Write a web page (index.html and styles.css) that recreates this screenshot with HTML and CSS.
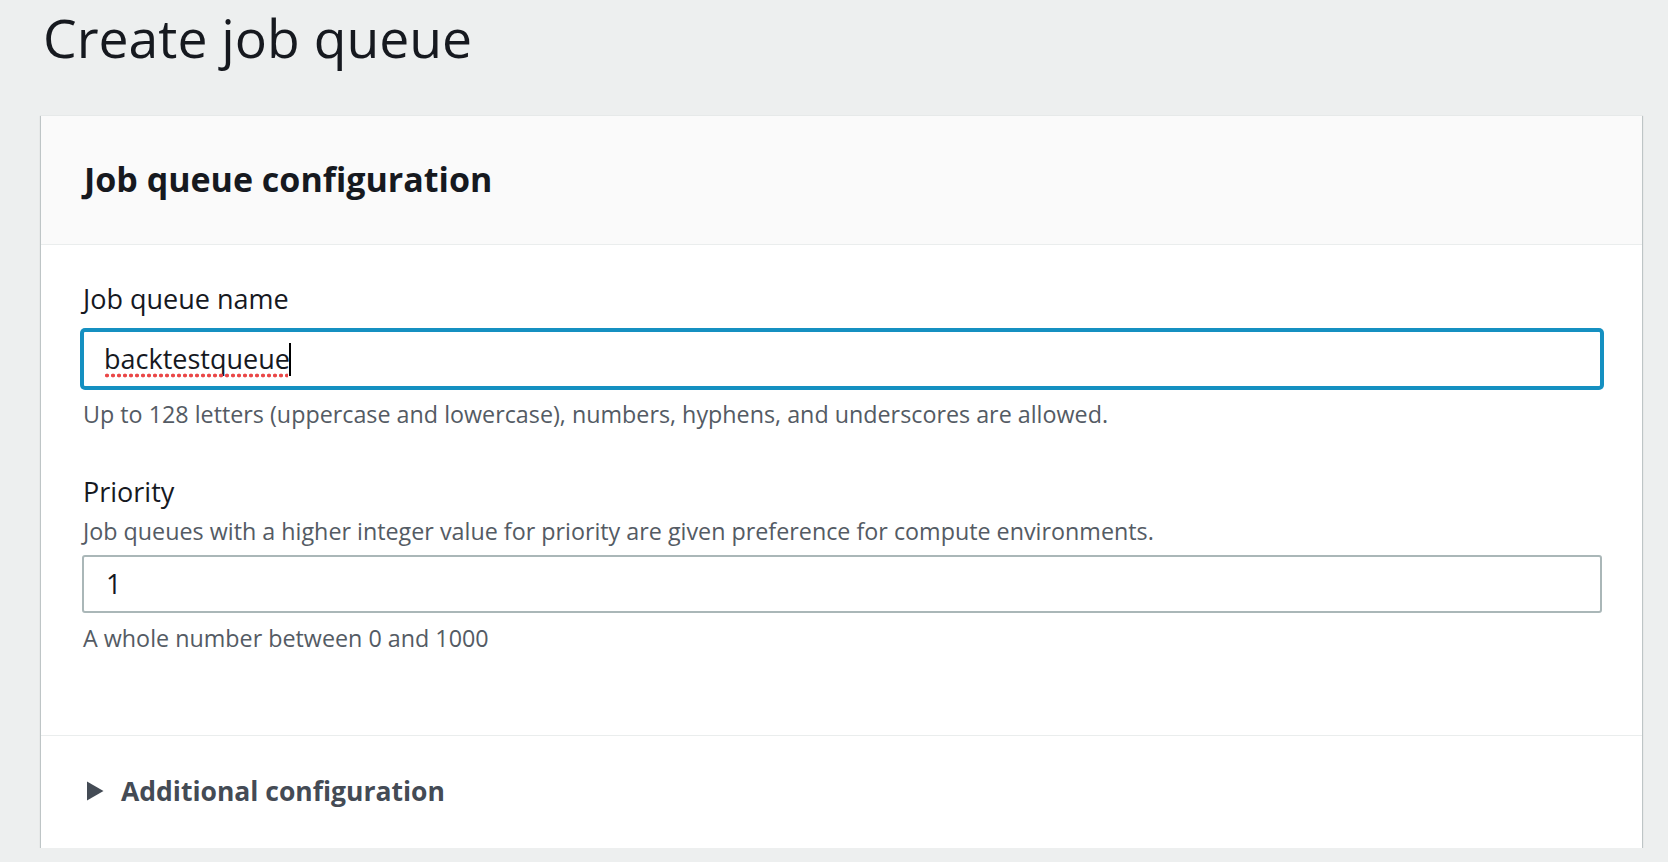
FILE: index.html
```html
<!DOCTYPE html>
<html lang="en">
<head>
<meta charset="utf-8">
<title>Create job queue</title>
<link rel="stylesheet" href="styles.css">
</head>
<body>
<main class="page">
  <h1 class="page-title">Create job queue</h1>
  <section class="card">
    <header class="card-header">
      <h2 class="card-title">Job queue configuration</h2>
    </header>
    <div class="card-body">
      <div class="field">
        <label class="field-label">Job queue name</label>
        <div class="input input-focused"><span class="value misspelled">backtestqueue</span><span class="caret"></span></div>
        <p class="field-help">Up to 128 letters (uppercase and lowercase), numbers, hyphens, and underscores are allowed.</p>
      </div>
      <div class="field field-second">
        <label class="field-label">Priority</label>
        <p class="field-desc">Job queues with a higher integer value for priority are given preference for compute environments.</p>
        <div class="input input-second"><span class="value">1</span></div>
        <p class="field-help">A whole number between 0 and 1000</p>
      </div>
    </div>
    <footer class="card-footer">
      <div class="expander">
        <svg class="expander-icon" width="22" height="20" viewBox="0 0 22 20" aria-hidden="true"><polygon points="5,0.5 21.5,10 5,19.5" fill="#444b55"/></svg>
        <span class="expander-label">Additional configuration</span>
      </div>
    </footer>
  </section>
</main>
</body>
</html>
```
FILE: styles.css
```css
html, body {
  margin: 0;
  padding: 0;
}
body {
  background: #edefef;
  font-family: "Open Sans", "Noto Sans", sans-serif;
  color: #16191f;
}
.page {
  padding: 6px 26px 0 41px;
}
.page-title {
  margin: 0;
  padding-left: 2px;
  font-size: 53.5px;
  line-height: 64px;
  font-weight: 400;
  color: #16191f;
}
.card {
  margin-top: 45px;
  background: #ffffff;
  border-top: 1px solid #e6e9e9;
  box-shadow: 0 1px 1px 0 rgba(0, 28, 36, 0.3), 1px 1px 1px 0 rgba(0, 28, 36, 0.15), -1px 1px 1px 0 rgba(0, 28, 36, 0.15);
}
.card-header {
  background: #fafafa;
  padding: 43px 40px 45px 43px;
  border-bottom: 1px solid #eaeded;
}
.card-title {
  margin: 0;
  font-size: 34px;
  line-height: 40px;
  font-weight: 700;
  color: #16191f;
}
.card-body {
  padding: 37px 40px 83px 41px;
}
.field {
  display: flex;
  flex-direction: column;
}
.field-second {
  margin-top: 47px;
}
.field-label {
  padding-left: 1px;
  font-size: 27px;
  line-height: 34px;
  color: #16191f;
}
.field-desc {
  margin: 8px 0 0;
  padding-left: 1px;
  font-size: 23.3px;
  line-height: 28px;
  color: #545b64;
}
.field-help {
  margin: 12px 0 0;
  padding-left: 1px;
  font-size: 23.3px;
  line-height: 28px;
  color: #545b64;
}
.field-second .field-help {
  margin-top: 11px;
}
.input {
  box-sizing: border-box;
  height: 58px;
  margin-top: 14px;
  border: 2px solid #aab7b8;
  border-radius: 3px;
  background: #fff;
  padding: 0 20px;
  display: flex;
  align-items: center;
  font-size: 27px;
  line-height: 34px;
  color: #16191f;
}
.input-second {
  margin-top: 10px;
}
.input-second .value {
  padding-left: 2px;
}
.input-focused {
  border-color: #1590c1;
  box-shadow: 0 0 0 2px #1590c1;
}
.value {
  position: relative;
}
.misspelled::after {
  content: "";
  position: absolute;
  left: 0;
  right: 2px;
  bottom: -2px;
  height: 5px;
  background-image: radial-gradient(circle, #ea4848 1.7px, transparent 2.2px);
  background-size: 6px 5px;
  background-repeat: repeat-x;
}
.caret {
  display: inline-block;
  width: 2px;
  height: 33px;
  background: #000;
  margin-left: -1px;
}
.card-footer {
  border-top: 1px solid #eaeded;
  padding: 38px 40px 40px 41px;
}
.expander {
  display: flex;
  align-items: center;
  gap: 17px;
}
.expander-icon {
  display: block;
  flex: none;
}
.expander-label {
  font-size: 26.5px;
  line-height: 34px;
  font-weight: 700;
  color: #444b55;
}
```
